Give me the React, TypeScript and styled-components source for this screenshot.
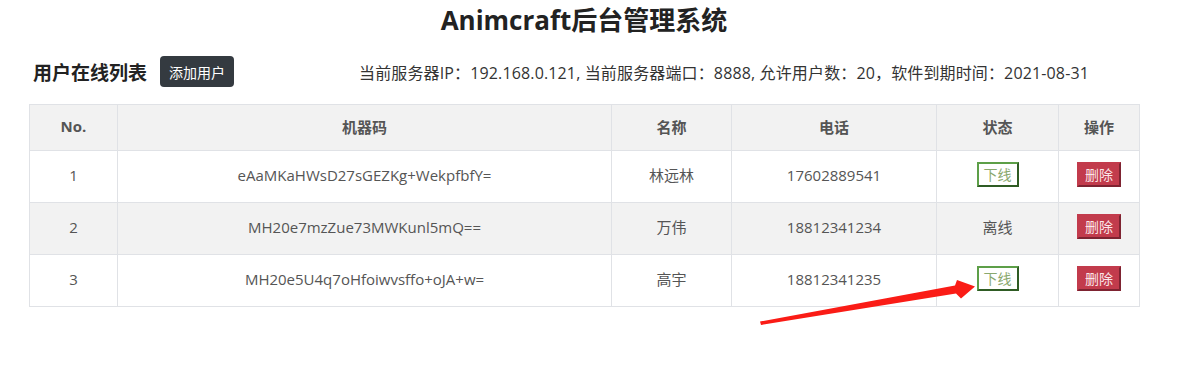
import styled, { createGlobalStyle } from "styled-components";

const GlobalStyle = createGlobalStyle`
  body {
    margin: 0;
    background: #fff;
    font-family: "Open Sans", "Noto Sans CJK SC", sans-serif;
    color: #333;
  }
`;

const Page = styled.div`
  position: relative;
  box-sizing: border-box;
  width: 1187px;
  min-height: 385px;
  padding: 5px 0 0 29px;
`;

const Title = styled.h1`
  width: 1110px;
  margin: 0;
  font-size: 26px;
  line-height: 30px;
  font-weight: 700;
  color: #222;
  text-align: center;
`;

const Toolbar = styled.div`
  display: flex;
  align-items: center;
  height: 31px;
  margin-top: 21px;
  padding-left: 4px;
`;

const ListTitle = styled.h2`
  margin: 0;
  font-size: 19px;
  font-weight: 700;
  color: #222;
`;

const AddButton = styled.button`
  margin-left: 13px;
  height: 31px;
  padding: 0 9px;
  border: none;
  border-radius: 4px;
  background: #343a40;
  color: #fff;
  font-family: inherit;
  font-size: 14px;
`;

const ServerInfo = styled.div`
  margin-left: 125px;
  font-size: 16px;
  letter-spacing: 0.14px;
  color: #333;
`;

const Table = styled.table`
  margin-top: 17px;
  width: 1110px;
  border-collapse: collapse;
  table-layout: fixed;
  font-size: 15px;
  color: #555;
`;

const Th = styled.th<{ $w: number }>`
  width: ${(p) => p.$w - 1}px;
  height: 42px;
  border: 1px solid #e0e2e6;
  background: #f2f2f2;
  font-weight: 700;
  color: #555;
  text-align: center;
  padding: 0 0 3px;
`;

const Row = styled.tr<{ $striped?: boolean }>`
  background: ${(p) => (p.$striped ? "#f2f2f2" : "#fff")};
`;

const Td = styled.td`
  height: 47px;
  border: 1px solid #e0e2e6;
  text-align: center;
  padding: 0 0 4px;
`;

const OfflineButton = styled.button`
  font-family: inherit;
  font-size: 14px;
  line-height: 19px;
  padding: 1px 5px;
  background: #fff;
  color: #8aa86e;
  border: 2px solid;
  border-color: #5d9f48 #2f5c24 #2f5c24 #5d9f48;
`;

const DeleteButton = styled.button`
  font-family: inherit;
  font-size: 14px;
  line-height: 19px;
  padding: 1px 6px;
  background: #c23b4c;
  color: #fbe6e9;
  border: 2px solid;
  border-color: #c23b4c #7e2331 #7e2331 #c23b4c;
`;

const Annotation = styled.svg`
  position: absolute;
  left: 0;
  top: 0;
  z-index: 2;
  pointer-events: none;
`;

const columns = [
  { label: "No.", w: 88 },
  { label: "机器码", w: 494 },
  { label: "名称", w: 120 },
  { label: "电话", w: 205 },
  { label: "状态", w: 122 },
  { label: "操作", w: 81 },
];

const users = [
  { no: 1, code: "eAaMKaHWsD27sGEZKg+WekpfbfY=", name: "林远林", phone: "17602889541", online: true },
  { no: 2, code: "MH20e7mzZue73MWKunl5mQ==", name: "万伟", phone: "18812341234", online: false },
  { no: 3, code: "MH20e5U4q7oHfoiwvsffo+oJA+w=", name: "高宇", phone: "18812341235", online: true },
];

export default function App() {
  return (
    <Page>
      <GlobalStyle />
      <Title>Animcraft后台管理系统</Title>
      <Toolbar>
        <ListTitle>用户在线列表</ListTitle>
        <AddButton>添加用户</AddButton>
        <ServerInfo>
          当前服务器IP：192.168.0.121, 当前服务器端口：8888, 允许用户数：20，软件到期时间：2021-08-31
        </ServerInfo>
      </Toolbar>
      <Table>
        <thead>
          <tr>
            {columns.map((c) => (
              <Th key={c.label} $w={c.w}>
                {c.label}
              </Th>
            ))}
          </tr>
        </thead>
        <tbody>
          {users.map((u, i) => (
            <Row key={u.no} $striped={i % 2 === 1}>
              <Td>{u.no}</Td>
              <Td>{u.code}</Td>
              <Td>{u.name}</Td>
              <Td>{u.phone}</Td>
              <Td>{u.online ? <OfflineButton>下线</OfflineButton> : "离线"}</Td>
              <Td>
                <DeleteButton>删除</DeleteButton>
              </Td>
            </Row>
          ))}
        </tbody>
      </Table>
      <Annotation width="1187" height="385" viewBox="0 0 1187 385">
        <polygon
          points="760,321.5 955,285.5 957,280 975,286.5 961,298.5 956,293.5 761,325"
          fill="#fa1c16"
        />
      </Annotation>
    </Page>
  );
}
